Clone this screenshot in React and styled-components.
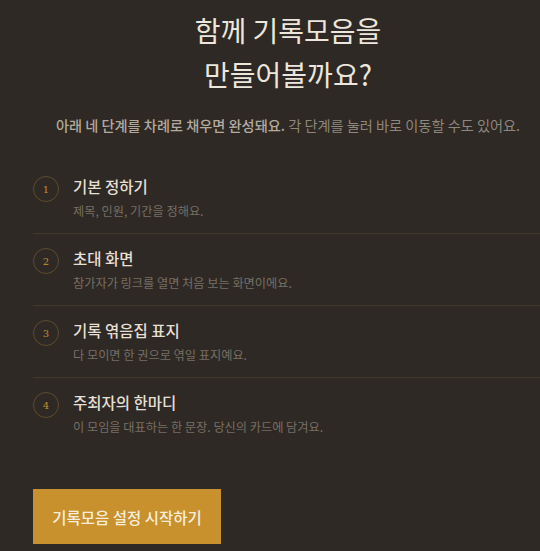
import React from 'react'
import styled, { createGlobalStyle } from 'styled-components'

const GlobalStyle = createGlobalStyle`
  html, body {
    margin: 0;
    padding: 0;
    background: #2e2924;
    overflow: hidden;
  }
  body {
    font-family: "Noto Sans CJK KR", "Noto Sans", sans-serif;
  }
`

const Page = styled.div`
  width: 510px;
  margin-left: 33px;
  padding-top: 8px;
  min-height: 551px;
  box-sizing: border-box;
`

const Title = styled.h1`
  margin: 0;
  text-align: center;
  font-size: 28px;
  line-height: 44px;
  font-weight: 400;
  color: #ece6dc;
`

const Lead = styled.p`
  margin: 18px 0 0;
  text-align: center;
  font-size: 14.2px;
  line-height: 22px;
  color: #8f877c;
  white-space: nowrap;
  strong {
    font-weight: 500;
    color: #b3aa9e;
  }
`

const Steps = styled.ol`
  list-style: none;
  margin: 26px 0 0;
  padding: 0;
`

const Step = styled.li`
  display: flex;
  align-items: flex-start;
  gap: 14px;
  padding: 13px 0;
  border-bottom: 1px solid ${p => (p.$last ? 'transparent' : '#40382d')};
  cursor: pointer;
`

const Num = styled.span`
  flex: none;
  width: 26px;
  height: 26px;
  margin-top: 1px;
  box-sizing: border-box;
  border: 1px solid #5e4c2c;
  border-radius: 50%;
  display: flex;
  align-items: center;
  justify-content: center;
  font-family: "DejaVu Serif", "Liberation Serif", serif;
  font-size: 10px;
  color: #c48f2e;
`

const StepText = styled.div`
  display: flex;
  flex-direction: column;
  gap: 5px;
`

const StepTitle = styled.div`
  font-size: 15.5px;
  line-height: 22px;
  font-weight: 500;
  color: #e6dfd4;
`

const StepDesc = styled.div`
  font-size: 12.2px;
  line-height: 18px;
  color: #776f65;
`

const StartButton = styled.button`
  margin-top: 39px;
  height: 55px;
  width: 188px;
  border: none;
  border-radius: 0;
  background: #c8912d;
  color: #f6eedd;
  font-family: inherit;
  font-size: 15.5px;
  font-weight: 500;
  cursor: pointer;
`

const steps = [
  { title: '기본 정하기', desc: '제목, 인원, 기간을 정해요.' },
  { title: '초대 화면', desc: '참가자가 링크를 열면 처음 보는 화면이에요.' },
  { title: '기록 엮음집 표지', desc: '다 모이면 한 권으로 엮일 표지예요.' },
  { title: '주최자의 한마디', desc: '이 모임을 대표하는 한 문장. 당신의 카드에 담겨요.' },
]

export default function App() {
  return (
    <>
      <GlobalStyle />
      <Page>
        <Title>
          함께 기록모음을
          <br />
          만들어볼까요?
        </Title>
        <Lead>
          <strong>아래 네 단계를 차례로 채우면 완성돼요.</strong> 각 단계를 눌러 바로 이동할 수도 있어요.
        </Lead>
        <Steps>
          {steps.map((s, i) => (
            <Step key={s.title} $last={i === steps.length - 1}>
              <Num>{i + 1}</Num>
              <StepText>
                <StepTitle>{s.title}</StepTitle>
                <StepDesc>{s.desc}</StepDesc>
              </StepText>
            </Step>
          ))}
        </Steps>
        <StartButton>기록모음 설정 시작하기</StartButton>
      </Page>
    </>
  )
}
